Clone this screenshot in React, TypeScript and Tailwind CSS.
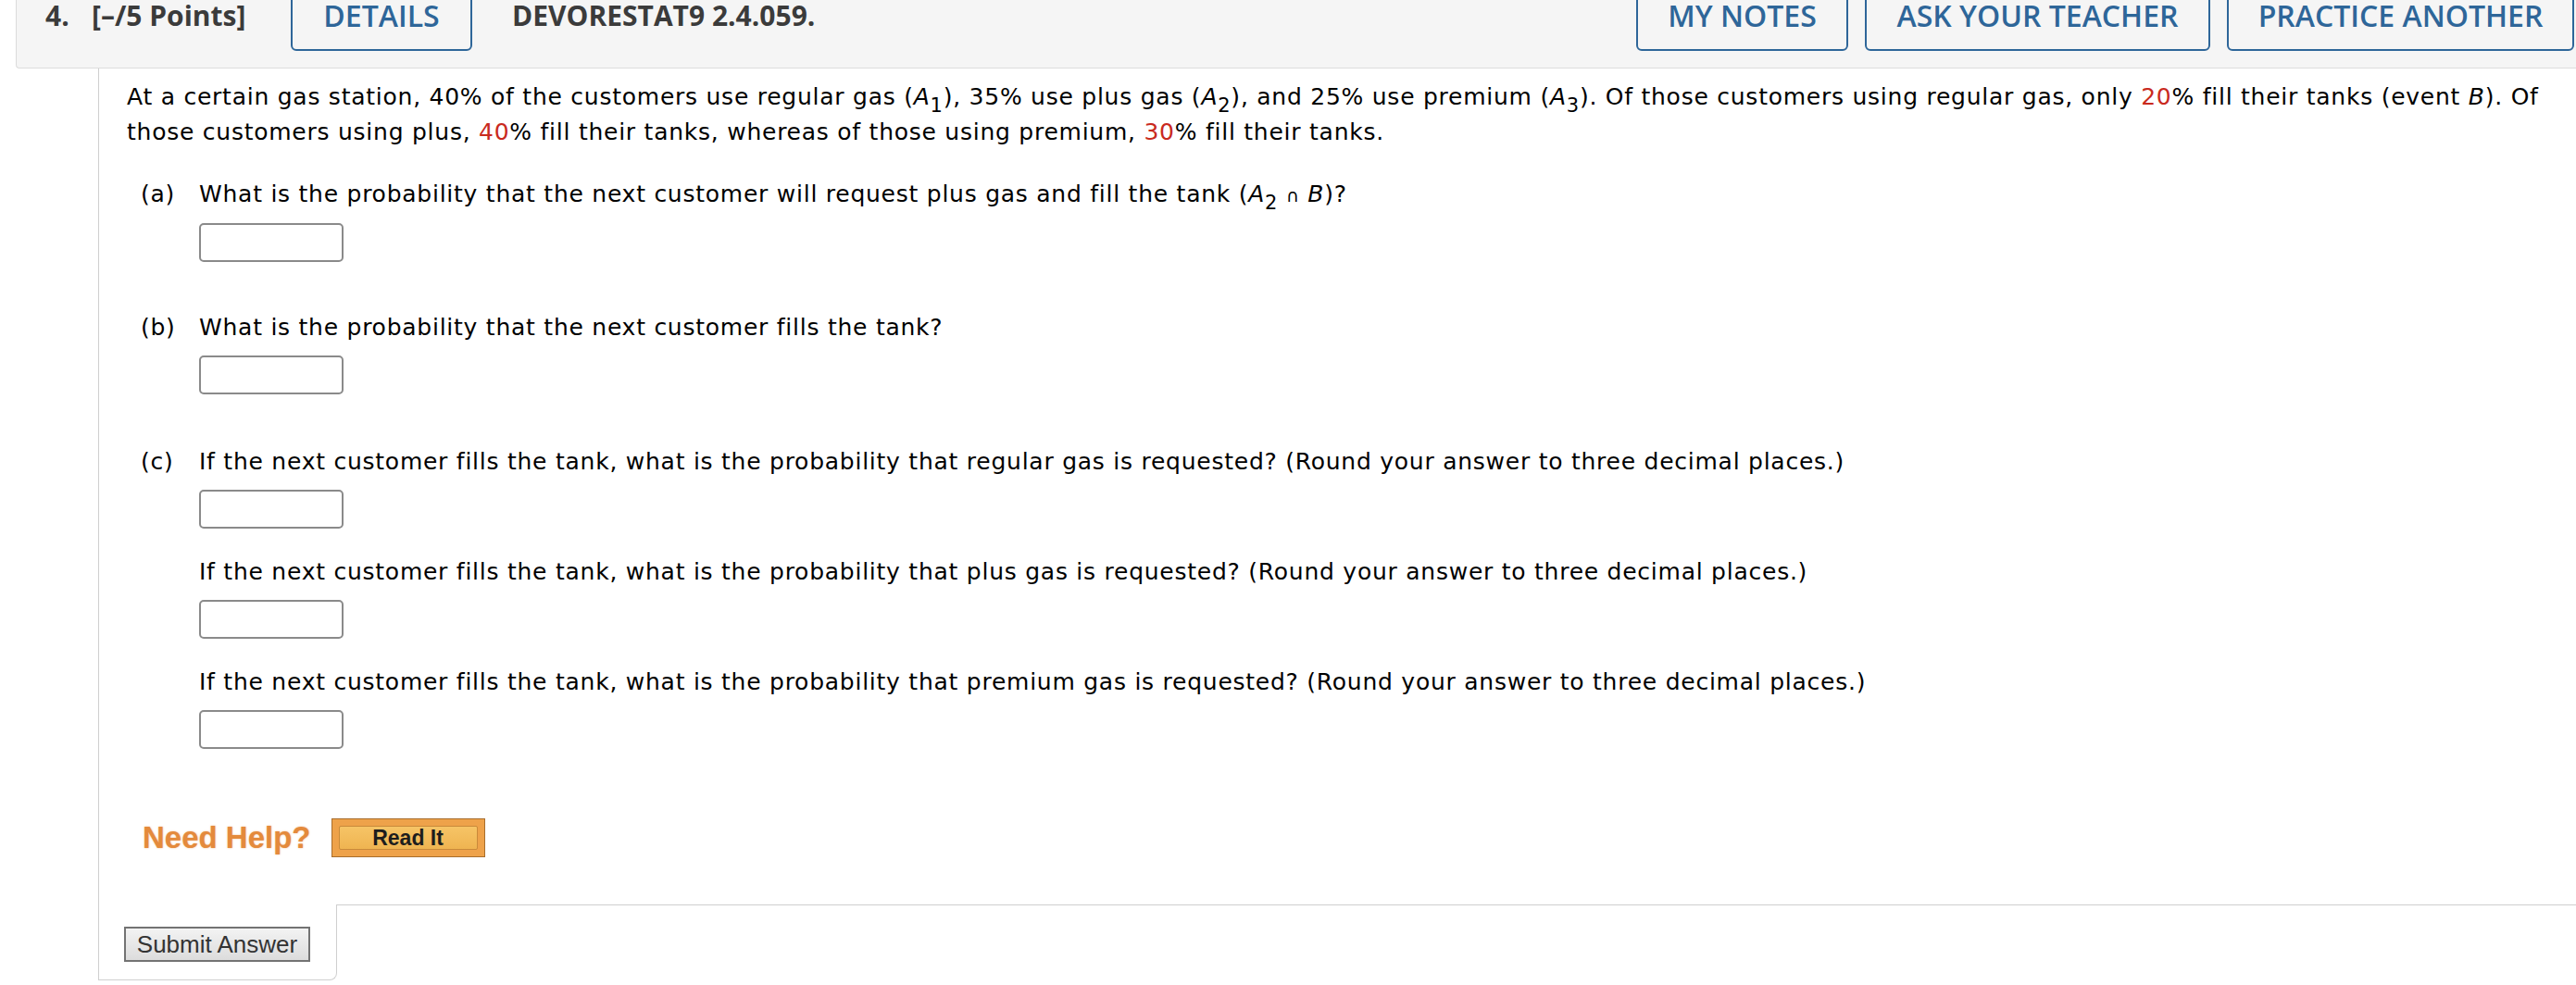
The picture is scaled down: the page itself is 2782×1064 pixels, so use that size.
import React from 'react'

const body = { fontFamily: '"DejaVu Sans", Verdana, sans-serif' }
const head = { fontFamily: '"Open Sans", "Liberation Sans", sans-serif' }
const arial = { fontFamily: '"Liberation Sans", Arial, sans-serif' }

function Sub({ children }: { children: React.ReactNode }) {
  return <span className="relative top-[8px] text-[21px] leading-none">{children}</span>
}

function A({ n }: { n: string }) {
  return (
    <>
      (<i>A</i>
      <Sub>{n}</Sub>)
    </>
  )
}

function Red({ children }: { children: React.ReactNode }) {
  return <span className="text-[#c92a1e]">{children}</span>
}

function HeadButton({ label, w }: { label: string; w: string }) {
  return (
    <div
      className={`${w} -mt-[24px] h-[79px] border-2 border-[#2e6699] rounded-[6px] pt-[24px] text-center text-[32px] leading-[30px] font-semibold text-[#2e6699]`}
    >
      {label}
    </div>
  )
}

function AnswerBox() {
  return <div className="w-[156px] h-[42px] border-2 border-[#8a8a8a] rounded-[5px] bg-white" />
}

export default function App() {
  return (
    <div className="w-[2782px] h-[1064px] bg-white overflow-hidden text-black">
      {/* header strip */}
      <div
        className="ml-[17px] h-[74px] bg-[#f5f5f5] border-l border-b border-[#dcdcdc] rounded-bl-[4px] overflow-hidden"
        style={head}
      >
        <div className="flex items-start">
          <div className="w-[50px] ml-[31px] pt-[2px] text-[30px] leading-[30px] font-bold text-[#3b3b3b]">4.</div>
          <div className="w-[215px] pt-[2px] text-[30px] leading-[30px] font-bold text-[#3b3b3b]">[–/5 Points]</div>
          <HeadButton label="DETAILS" w="w-[196px]" />
          <div className="ml-[43px] pt-[2px] text-[30px] leading-[30px] font-bold text-[#3b3b3b]">DEVORESTAT9 2.4.059.</div>
          <div className="ml-auto mr-[2px] flex gap-[18px]">
            <HeadButton label="MY NOTES" w="w-[229px]" />
            <HeadButton label="ASK YOUR TEACHER" w="w-[373px]" />
            <HeadButton label="PRACTICE ANOTHER" w="w-[375px]" />
          </div>
        </div>
      </div>

      {/* question panel */}
      <div className="ml-[106px] border-l border-[#cfcfcf]" style={body}>
        <div className="pl-[30px] pt-[12px] text-[25px] tracking-[0.75px] leading-[38px] whitespace-nowrap">
          <p>
            At a certain gas station, 40% of the customers use regular gas <A n="1" />, 35% use plus gas <A n="2" />, and
            25% use premium <A n="3" />. Of those customers using regular gas, only <Red>20</Red>% fill their tanks
            (event <i>B</i>). Of
            <br />
            those customers using plus, <Red>40</Red>% fill their tanks, whereas of those using premium, <Red>30</Red>%
            fill their tanks.
          </p>

          <div className="pl-[15px]">
            <div className="mt-[29px] flex">
              <span className="w-[63px]">(a)</span>
              <div>
                <p>
                  What is the probability that the next customer will request plus gas and fill the tank (<i>A</i>
                  <Sub>2</Sub> <span className="text-[19px]">∩</span> <i>B</i>)?
                </p>
                <div className="mt-[11px]">
                  <AnswerBox />
                </div>
              </div>
            </div>

            <div className="mt-[52px] flex">
              <span className="w-[63px]">(b)</span>
              <div>
                <p>What is the probability that the next customer fills the tank?</p>
                <div className="mt-[11px]">
                  <AnswerBox />
                </div>
              </div>
            </div>

            <div className="mt-[54px] flex">
              <span className="w-[63px]">(c)</span>
              <div>
                <p>
                  If the next customer fills the tank, what is the probability that regular gas is requested? (Round
                  your answer to three decimal places.)
                </p>
                <div className="mt-[11px]">
                  <AnswerBox />
                </div>
                <p className="mt-[28px]">
                  If the next customer fills the tank, what is the probability that plus gas is requested? (Round your
                  answer to three decimal places.)
                </p>
                <div className="mt-[11px]">
                  <AnswerBox />
                </div>
                <p className="mt-[28px]">
                  If the next customer fills the tank, what is the probability that premium gas is requested? (Round
                  your answer to three decimal places.)
                </p>
                <div className="mt-[11px]">
                  <AnswerBox />
                </div>
              </div>
            </div>
          </div>

          {/* need help */}
          <div className="mt-[75px] ml-[17px] flex items-center gap-[22px] tracking-normal" style={arial}>
            <span className="text-[33px] leading-[42px] font-bold text-[#e48a3c] [text-shadow:0_0_2px_rgba(228,138,60,0.6)]">
              Need Help?
            </span>
            <button className="w-[166px] h-[42px] border border-[#a86d2c] bg-[#eea24a] p-[7px]">
              <div className="h-full border border-[#c98a3a] bg-gradient-to-b from-[#f6c466] to-[#efb451] rounded-[2px] flex items-center justify-center text-[23px] font-bold text-[#1d1d1d] leading-none">
                Read It
              </div>
            </button>
          </div>
        </div>

        {/* bottom tab with submit */}
        <div className="mt-[51px] flex">
          <div className="w-[257px] h-[82px] border-b border-r border-[#cfcfcf] rounded-br-[8px] pl-[27px] pt-[24px]">
            <button
              className="w-[201px] h-[38px] border-2 border-[#737373] bg-gradient-to-b from-[#f3f3f3] to-[#dcdcdc] text-[26px] leading-none text-[#333]"
              style={arial}
            >
              Submit Answer
            </button>
          </div>
          <div className="flex-1 border-t border-[#cfcfcf]" />
        </div>
      </div>
    </div>
  )
}
